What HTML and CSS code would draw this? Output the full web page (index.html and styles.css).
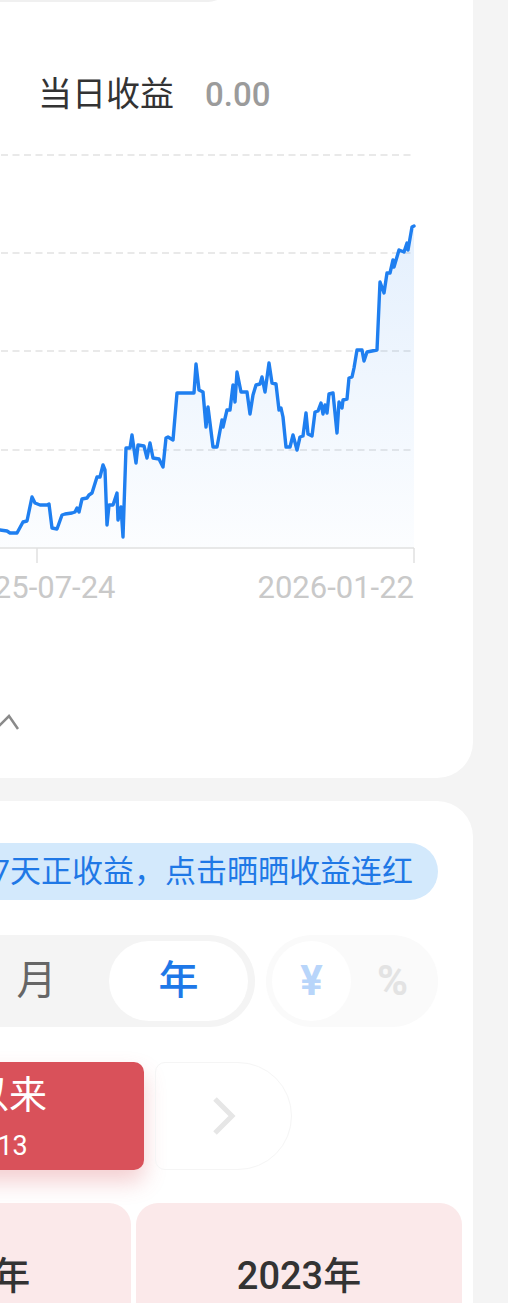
FILE: index.html
```html
<!DOCTYPE html>
<html lang="zh-CN">
<head>
  <meta charset="UTF-8" />
  <meta name="viewport" content="width=device-width, initial-scale=1.0"/>
  <title>收益走势</title>
  <link rel="stylesheet" href="styles.css">
</head>
<body>
  <div class="screen">
    <section class="card trend">
      <div class="range-tabs"></div>

      <div class="day-row">
        <span class="day-label">当日收益</span>
        <span class="day-value">0.00</span>
      </div>

      <svg class="chart" width="560" height="420" viewBox="-137 145 560 420">
        <defs>
          <linearGradient id="area" gradientUnits="userSpaceOnUse" x1="0" y1="226" x2="0" y2="548">
            <stop offset="0" stop-color="#1f7ff0" stop-opacity="0.12"/>
            <stop offset="1" stop-color="#1f7ff0" stop-opacity="0.015"/>
          </linearGradient>
        </defs>
        <g class="grid">
          <line x1="-137" y1="155" x2="414" y2="155"/>
          <line x1="-137" y1="253" x2="414" y2="253"/>
          <line x1="-137" y1="351" x2="414" y2="351"/>
          <line x1="-137" y1="450" x2="414" y2="450"/>
        </g>
        <polygon class="area" points="-5,530 0,530 7,531 10,533 17,533 23,522 27,521 32,497 35,503 40,505 47,505 49,504 52,528 57,529 62,515 65,514 72,513 75,512 77,508 79,512 82,499 87,498 89,495 92,493 97,477 100,477 103,465 105,470 107,525 109,505 113,505 117,493 118,520 121,507 123,537 126,448 130,448 132,435 136,463 138,445 144,446 147,458 150,443 153,458 159,459 163,467 166,438 168,437 173,440 177,393 194,393 196,364 199,390 203,392 206,427 208,407 213,447 217,447 222,420 223,427 227,410 230,410 233,385 235,402 237,372 241,392 247,392 250,414 253,395 256,385 260,384 262,377 265,392 269,363 272,383 276,384 279,410 281,408 283,417 286,447 290,447 293,435 297,450 300,437 303,436 306,413 308,434 312,436 315,412 318,411 321,403 323,414 325,405 327,413 329,394 333,393 337,433 339,402 342,408 343,400 347,399 349,378 352,377 354,368 357,350 362,350 364,361 367,352 377,350 380,282 384,293 387,273 390,273 393,260 394,267 399,250 404,252 407,243 408,250 412,227 414,226 414,548 -5,548"/>
        <polyline class="line" points="-5,530 0,530 7,531 10,533 17,533 23,522 27,521 32,497 35,503 40,505 47,505 49,504 52,528 57,529 62,515 65,514 72,513 75,512 77,508 79,512 82,499 87,498 89,495 92,493 97,477 100,477 103,465 105,470 107,525 109,505 113,505 117,493 118,520 121,507 123,537 126,448 130,448 132,435 136,463 138,445 144,446 147,458 150,443 153,458 159,459 163,467 166,438 168,437 173,440 177,393 194,393 196,364 199,390 203,392 206,427 208,407 213,447 217,447 222,420 223,427 227,410 230,410 233,385 235,402 237,372 241,392 247,392 250,414 253,395 256,385 260,384 262,377 265,392 269,363 272,383 276,384 279,410 281,408 283,417 286,447 290,447 293,435 297,450 300,437 303,436 306,413 308,434 312,436 315,412 318,411 321,403 323,414 325,405 327,413 329,394 333,393 337,433 339,402 342,408 343,400 347,399 349,378 352,377 354,368 357,350 362,350 364,361 367,352 377,350 380,282 384,293 387,273 390,273 393,260 394,267 399,250 404,252 407,243 408,250 412,227 414,226"/>
        <g class="axis">
          <line x1="-137" y1="548" x2="414" y2="548"/>
          <line x1="37" y1="548" x2="37" y2="563"/>
          <line x1="414" y1="548" x2="414" y2="563"/>
        </g>
      </svg>

      <div class="chart-axis">
        <span>2025-07-24</span>
        <span>2026-01-22</span>
      </div>

      <div class="fold">
        <svg width="28" height="28" viewBox="0 0 28 28">
          <polyline points="1,21 14,8 23,21"/>
        </svg>
      </div>
    </section>

    <section class="card calendar">
      <div class="streak-row">
        <div class="streak">已连续7天正收益，点击晒晒收益连红</div>
      </div>

      <div class="switches">
        <div class="seg">
          <span class="seg-item">周</span>
          <span class="seg-item">月</span>
          <span class="seg-item active">年</span>
        </div>
        <div class="seg unit">
          <span class="seg-item active">¥</span>
          <span class="seg-item">%</span>
        </div>
      </div>

      <div class="periods">
        <div class="period active">
          <div class="period-name">成立以来</div>
          <div class="period-sum">+1023.13</div>
        </div>
        <div class="period-more">
          <svg width="26" height="40" viewBox="0 0 26 40">
            <polyline points="4,3 21,20 4,37"/>
          </svg>
        </div>
      </div>

      <div class="years">
        <div class="year-card">2024年</div>
        <div class="year-card">2023年</div>
      </div>
    </section>
  </div>
</body>
</html>
```

FILE: styles.css
```css
body {
  margin: 0;
  width: 508px;
  height: 1303px;
  overflow: hidden;
  background: #f4f4f4;
  color: #333;
  font-family: "Roboto", "Noto Sans CJK SC", sans-serif;
}

.screen {
  margin-left: -300px;
  padding-right: 35px;
}

.card {
  background: #fff;
  border-radius: 36px;
}

/* trend card */
.trend {
  margin-top: -42px;
  padding-bottom: 42px;
}

.range-tabs {
  width: 420px;
  height: 44px;
  margin-left: 110px;
  border-radius: 22px;
  background: #f0f0f0;
}

.day-row {
  display: flex;
  align-items: baseline;
  gap: 31px;
  height: 40px;
  margin-top: 72px;
  padding-left: 338px;
  font-size: 34px;
  line-height: 40px;
}

.day-value {
  color: #9b9b9b;
  font-size: 33px;
  font-weight: 500;
}

.chart {
  display: block;
  margin-top: 31px;
  margin-left: 163px;
}

.grid line {
  stroke: #e2e2e2;
  stroke-width: 1.5;
  stroke-dasharray: 7 4.5;
}

.area {
  fill: url(#area);
}

.line {
  fill: none;
  stroke: #1f7ff0;
  stroke-width: 3.4;
  stroke-linejoin: round;
  stroke-linecap: round;
}

.axis line {
  stroke: #e0e0e0;
  stroke-width: 1.5;
}

.chart-axis {
  display: flex;
  justify-content: space-between;
  width: 455px;
  margin-top: 5px;
  margin-left: 259px;
  font-size: 31px;
  line-height: 36px;
  color: #c9c9c9;
}

.fold {
  width: 28px;
  height: 28px;
  margin-top: 102px;
  margin-left: 295px;
}

.fold svg {
  display: block;
}

.fold polyline {
  fill: none;
  stroke: #8a8a8a;
  stroke-width: 2.5;
}

/* calendar card */
.calendar {
  margin-top: 23px;
  padding: 42px 0 40px;
}

.streak-row {
  display: flex;
  justify-content: flex-end;
  padding-right: 35px;
}

.streak {
  height: 57px;
  padding: 0 25px 0 40px;
  border-radius: 29px;
  background: #d3e9fc;
  color: #1f78e6;
  font-size: 31px;
  line-height: 57px;
  white-space: nowrap;
}

.switches {
  display: flex;
  justify-content: flex-end;
  gap: 11px;
  margin-top: 35px;
  padding-right: 35px;
}

.seg {
  display: flex;
  gap: 3px;
  padding: 6px 7px;
  border-radius: 46px;
  background: #f4f4f4;
}

.seg-item {
  width: 139px;
  height: 80px;
  border-radius: 40px;
  text-align: center;
  font-size: 40px;
  line-height: 80px;
  color: #666;
}

.seg-item.active {
  background: #fff;
  color: #1e78e8;
  font-weight: 500;
}

.seg.unit {
  gap: 2px;
  padding: 6px;
  background: #fafafa;
}

.unit .seg-item {
  width: 79px;
  font-size: 42px;
  font-weight: 700;
  color: #e3e3e3;
}

.unit .seg-item.active {
  color: #b8d5fa;
}

.periods {
  display: flex;
  justify-content: flex-end;
  gap: 11px;
  margin-top: 35px;
  padding-right: 181px;
}

.period {
  box-sizing: border-box;
  width: 346px;
  height: 108px;
  padding-top: 10px;
  border-radius: 10px;
  background: #d9515a;
  color: #fff;
  text-align: center;
  box-shadow: 0 12px 22px rgba(217, 81, 90, 0.28);
}

.period-name {
  font-size: 38px;
  line-height: 46px;
}

.period-sum {
  margin-top: 13px;
  font-size: 27px;
  line-height: 31px;
}

.period-more {
  box-sizing: border-box;
  display: flex;
  align-items: center;
  justify-content: center;
  width: 137px;
  height: 108px;
  border: 1px solid #f5f5f5;
  border-radius: 10px 54px 54px 10px;
}

.period-more polyline {
  fill: none;
  stroke: #e6e6e6;
  stroke-width: 5;
}

.years {
  display: flex;
  justify-content: flex-end;
  gap: 5px;
  margin-top: 33px;
  padding-right: 11px;
}

.year-card {
  box-sizing: border-box;
  width: 326px;
  height: 150px;
  padding-top: 50px;
  border-radius: 22px;
  background: #fbe9ea;
  text-align: center;
  font-size: 38px;
  font-weight: 500;
  line-height: 46px;
  color: #333;
}
```
